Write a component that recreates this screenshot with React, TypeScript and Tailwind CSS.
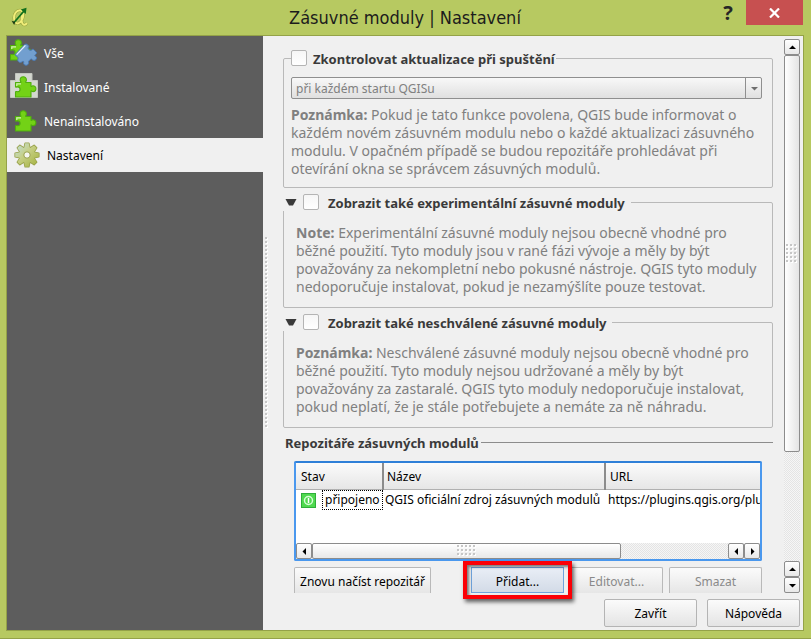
import type { ReactNode } from "react";

const PUZZLE =
  "M1 6.500H6C7.200 6.500 5.700 5.200 5.700 3.900A3.100 3.100 0 0 1 11.900 3.900C11.900 5.200 10.400 6.500 11.600 6.500H16.500V10C16.500 11.200 17.300 9.800 18.500 9.800A2.900 2.900 0 0 1 18.500 15.600C17.300 15.600 16.500 14.200 16.500 15.400V21H1V16.500C1 14.800 2.200 15.700 3.200 15.700A2.400 2.400 0 0 0 3.200 10.900C2.200 10.900 1 11.800 1 10.500Z";

function PuzzleShape() {
  return (
    <>
      <path d={PUZZLE} fill="#73d216" stroke="#4fae0e" strokeWidth="1.1" strokeLinejoin="round" />
      <path d="M2.300 10V7.800H6.500" fill="none" stroke="#fff" strokeOpacity=".7" strokeWidth="1.200" />
    </>
  );
}

function AllIcon() {
  return (
    <svg viewBox="0 0 28 28" className="size-7 shrink-0" aria-hidden="true">
      <g transform="translate(-.5 0)">
        <PuzzleShape />
      </g>
      <path
        d="M5 15.800 14.200 6C15.400 4.800 16.600 4.800 17.600 5.800L18.600 7C19.200 8 17.800 8.200 18.200 9.600 18.800 11.400 21 12 22.200 10.600 22.800 9.800 23.400 10.200 24 10.800L26.600 13.600C27 14.200 25.600 15.400 24.800 16.200 24.200 17 26.600 17 26.600 19A2.600 2.600 0 0 1 22.600 21C21.800 20.400 21.400 19.600 20.600 20.200L18.800 22C18.200 22.600 18.800 23 18.600 24.200A2.600 2.600 0 0 1 13.600 24.600C13.400 23.600 14.200 22.800 13.400 22.400 12.400 22 12 23.400 10.400 23.400A2.500 2.500 0 0 1 7.800 20.400C8 19.400 8.600 19 8 18.400Z"
        fill="#729fcf"
        stroke="#4a7ab5"
        strokeWidth="1"
        strokeLinejoin="round"
      />
      <path d="M6.600 15.600 15.400 6.400" stroke="#e4effa" strokeWidth="1.300" />
    </svg>
  );
}

function InstalledIcon() {
  return (
    <svg viewBox="0 0 28 28" className="size-7 shrink-0" aria-hidden="true">
      <path d="M5.500 .5H22V7.500H27.500V24.500H.5V7.500H5.500Z" fill="#d3d7cf" stroke="#c2c5be" strokeWidth="1" />
      <g transform="translate(4.500 3)">
        <PuzzleShape />
      </g>
    </svg>
  );
}

function AvailableIcon() {
  return (
    <svg viewBox="0 0 28 28" className="size-7 shrink-0" aria-hidden="true">
      <g transform="translate(4.500 3)">
        <PuzzleShape />
      </g>
    </svg>
  );
}

const TEETH = [0, 45, 90, 135, 180, 225, 270, 315];

function GearIcon() {
  return (
    <svg viewBox="0 0 26 26" className="size-[26px] shrink-0" aria-hidden="true">
      <defs>
        <linearGradient id="gear" x1="0" y1="0" x2="26" y2="26" gradientUnits="userSpaceOnUse">
          <stop offset="0" stopColor="#bfe0ea" />
          <stop offset=".45" stopColor="#c6cf84" />
          <stop offset="1" stopColor="#a0ae34" />
        </linearGradient>
        <mask id="gear-shape">
          {TEETH.map((a) => (
            <path key={a} d="M10 7 11.200 1.200H14.800L16 7Z" fill="#fff" transform={`rotate(${a} 13 13)`} />
          ))}
          <circle cx="13" cy="13" r="7.800" fill="#fff" />
        </mask>
      </defs>
      <g fill="#98a14a" stroke="#98a14a" strokeWidth="1.600" strokeLinejoin="round">
        {TEETH.map((a) => (
          <path key={a} d="M10 7 11.200 1.200H14.800L16 7Z" transform={`rotate(${a} 13 13)`} />
        ))}
        <circle cx="13" cy="13" r="7.800" />
      </g>
      <rect width="26" height="26" fill="url(#gear)" mask="url(#gear-shape)" />
      <circle cx="13" cy="13" r="3.200" fill="#f6f6f0" stroke="#98a14a" />
    </svg>
  );
}

const LETTER_Q =
  "M9 3.200C5.500 3.200 3 6.800 3 10.800c0 3.600 1.600 5.800 3.800 5.600 3-.4 5.400-4.400 5.400-8.200 0-3-1.200-5-3.200-5ZM11 8c-.6 4-.6 8.600 1.600 9.600 1.400.5 2.600-.4 3.200-1.800";

function AppLogo() {
  return (
    <svg viewBox="0 0 18 20" className="h-5 w-[18px]" aria-hidden="true">
      <path d={LETTER_Q} fill="none" stroke="#98a23e" strokeWidth="3" />
      <path d={LETTER_Q} fill="none" stroke="#f1ee7a" strokeWidth="2" />
      <path d="M3 15.500 13 4" stroke="#12701c" strokeWidth="1.800" />
      <path d="M15.500.8 14.800 7 9.800 2.600Z" fill="#12701c" />
      <path d="M.5 13.800 4.200 15 3.200 18Z" fill="#1c3a14" />
    </svg>
  );
}

function Grip({ cols, rows }: { cols: number; rows: number }) {
  return (
    <svg width={cols * 4} height={rows * 4} shapeRendering="crispEdges" aria-hidden="true">
      {Array.from({ length: cols * rows }, (_, i) => {
        const x = (i % cols) * 4;
        const y = Math.floor(i / cols) * 4;
        return (
          <g key={i}>
            <rect x={x + 1} y={y + 1} width="2" height="2" fill="#fff" />
            <rect x={x} y={y} width="2" height="2" fill="#c6c6c6" />
          </g>
        );
      })}
    </svg>
  );
}

const ARROWS = {
  up: "M1 6 4.500 2.500 8 6Z",
  down: "M1 3 4.500 6.500 8 3Z",
  left: "M6 1 2.500 4.500 6 8Z",
  right: "M3 1 6.500 4.500 3 8Z",
};

function ScrollButton({ dir, label }: { dir: keyof typeof ARROWS; label: string }) {
  return (
    <button
      type="button"
      aria-label={label}
      className="flex size-4 shrink-0 items-center justify-center rounded-xs border border-[#8c8c8c] bg-linear-to-b from-white to-[#e8e8e8]"
    >
      <svg viewBox="0 0 9 9" className="size-[9px] shrink-0" aria-hidden="true">
        <path d={ARROWS[dir]} fill="#000" />
      </svg>
    </button>
  );
}

const TRACK = "bg-[repeating-conic-gradient(#e4e4e4_0_25%,#f6f6f6_0_50%)] bg-size-[2px_2px]";

const HEADING = "pt-px text-[13px] leading-4 font-bold text-[#3a3a3a]";

function Check({ id }: { id: string }) {
  return (
    <input
      id={id}
      type="checkbox"
      className="size-4 shrink-0 appearance-none rounded-xs border border-[#b4b4b4] bg-linear-to-b from-[#f6f6f6] to-white"
    />
  );
}

function Note({ title, children }: { title: string; children: ReactNode }) {
  return (
    <p className="text-sm leading-[18px] whitespace-nowrap text-[#808080]">
      <b>{title}</b> {children}
    </p>
  );
}

function CollapsibleGroup({ id, title, children }: { id: string; title: string; children: ReactNode }) {
  return (
    <fieldset className="rounded-xs border border-[#b9b9b9] pr-2 pb-[11px] pl-3">
      <legend className="-ml-[13px] flex h-[18px] items-center bg-[#f0f0f0] pl-0.5">
        <button type="button" aria-label="Sbalit" className="mr-1.5 shrink-0">
          <svg viewBox="0 0 12 8" className="h-2 w-3" aria-hidden="true">
            <path d="M.5 1H11.500L8 7.500H4Z" fill="#3a3a3a" />
          </svg>
        </button>
        <Check id={id} />
        <label htmlFor={id} className={`${HEADING} pr-1.5 pl-[9px]`}>
          {title}
        </label>
      </legend>
      <div className="pt-[13px]">{children}</div>
    </fieldset>
  );
}

const NAV = [
  { label: "Vše", icon: <AllIcon /> },
  { label: "Instalované", icon: <InstalledIcon /> },
  { label: "Nenainstalováno", icon: <AvailableIcon /> },
];

const PUSH =
  "h-[26px] rounded-t-xs border border-b-0 border-[#b9b9b9] bg-linear-to-b from-[#fbfbfb] to-[#e6e6e6] pt-[3px] whitespace-nowrap";

const FOOT = "h-7 w-[93px] rounded-xs border border-[#b4b4b4] bg-linear-to-b from-[#fbfbfb] to-[#e4e4e4] pt-0.5";

export default function App() {
  return (
    <div className="flex h-screen flex-col overflow-hidden border-b border-[#94a248] bg-[#b7c961] pr-[7px] pb-[7px] pl-1.5 font-['Noto_Sans','DejaVu_Sans_Condensed',sans-serif] text-xs text-black">
      <header className="grid h-[35px] shrink-0 grid-cols-[1fr_auto_1fr] items-start">
        <div className="pt-[7px] pl-[5px]">
          <AppLogo />
        </div>
        <h1 className="pt-1.5 font-['DejaVu_Sans_Condensed','Noto_Sans',sans-serif] text-lg leading-6 text-[#1c1c1c]">
          Zásuvné moduly | Nastavení
        </h1>
        <div className="flex justify-end">
          <button type="button" aria-label="Nápověda k oknu" className="w-9 text-xl leading-6 font-bold text-[#262626]">
            ?
          </button>
          <button
            type="button"
            aria-label="Zavřít okno"
            className="mr-px flex h-[25px] w-[57px] items-center justify-center bg-[#c75050]"
          >
            <svg viewBox="0 0 11 10" className="h-2.5 w-[11px]" aria-hidden="true">
              <path d="M1 .5 10 9.500M10 .5 1 9.500" stroke="#fff" strokeWidth="2.200" />
            </svg>
          </button>
        </div>
      </header>

      <div className="flex min-h-0 flex-1 border border-[#94a248] bg-[#f0f0f0]">
        <nav className="w-64 shrink-0 bg-[#5d5d5d] text-white">
          <ul>
            {NAV.map((n) => (
              <li key={n.label}>
                <button type="button" className="flex h-[34px] w-full items-center gap-1.5 pl-[3px]">
                  {n.icon}
                  <span className="pt-0.5">{n.label}</span>
                </button>
              </li>
            ))}
            <li>
              <button
                type="button"
                aria-current="page"
                className="flex h-[34px] w-full items-center gap-[7px] bg-[#f0f0f0] pl-[7px] text-black"
              >
                <GearIcon />
                <span className="pt-0.5">Nastavení</span>
              </button>
            </li>
          </ul>
        </nav>

        <div className="flex w-5 shrink-0 items-center pl-0.5">
          <Grip cols={1} rows={48} />
        </div>

        <div className="flex min-w-0 flex-1 flex-col pr-[3px] pb-[3px]">
          <div className="flex h-[557px] shrink-0 pt-[3px]">
            <main className="mr-[11px] flex min-w-0 flex-1 flex-col gap-[5px] pt-2.5">
              <fieldset className="rounded-xs border border-[#b9b9b9] pr-2.5 pb-[9px] pl-[7px]">
                <legend className="flex h-[18px] items-center pr-px">
                  <Check id="updates" />
                  <label htmlFor="updates" className={`${HEADING} pl-1.5`}>
                    Zkontrolovat aktualizace při spuštění
                  </label>
                </legend>
                <div className="relative mt-2.5 mb-[7px] text-[#808080]">
                  <select
                    aria-label="Interval kontroly"
                    disabled
                    className="block h-[22px] w-full appearance-none rounded-xs border border-[#8f8f8f] bg-linear-to-b from-[#f8f8f8] to-[#e0e0e0] pt-0.5 pl-1 opacity-100"
                  >
                    <option>při každém startu QGISu</option>
                  </select>
                  <span className="pointer-events-none absolute inset-y-0 right-0 flex w-[17px] items-center justify-center border-l border-[#8f8f8f]">
                    <svg viewBox="0 0 9 9" className="size-[9px]" aria-hidden="true">
                      <path d={ARROWS.down} fill="#6e6e6e" />
                    </svg>
                  </span>
                </div>
                <Note title="Poznámka:">
                  Pokud je tato funkce povolena, QGIS bude informovat o
                  <br />
                  každém novém zásuvném modulu nebo o každé aktualizaci zásuvného
                  <br />
                  modulu. V opačném případě se budou repozitáře prohledávat při
                  <br />
                  otevírání okna se správcem zásuvných modulů.
                </Note>
              </fieldset>

              <CollapsibleGroup id="experimental" title="Zobrazit také experimentální zásuvné moduly">
                <Note title="Note:">
                  Experimentální zásuvné moduly nejsou obecně vhodné pro
                  <br />
                  běžné použití. Tyto moduly jsou v rané fázi vývoje a měly by být
                  <br />
                  považovány za nekompletní nebo pokusné nástroje. QGIS tyto moduly
                  <br />
                  nedoporučuje instalovat, pokud je nezamýšlíte pouze testovat.
                </Note>
              </CollapsibleGroup>

              <CollapsibleGroup id="deprecated" title="Zobrazit také neschválené zásuvné moduly">
                <Note title="Poznámka:">
                  Neschválené zásuvné moduly nejsou obecně vhodné pro
                  <br />
                  běžné použití. Tyto moduly nejsou udržované a měly by být
                  <br />
                  považovány za zastaralé. QGIS tyto moduly nedoporučuje instalovat,
                  <br />
                  pokud neplatí, že je stále potřebujete a nemáte za ně náhradu.
                </Note>
              </CollapsibleGroup>

              <section>
                <div className="flex h-[18px] items-center gap-0.5 pl-0.5">
                  <h2 className={HEADING}>Repozitáře zásuvných modulů</h2>
                  <span className="h-px flex-1 bg-[#8c8c8c]" />
                </div>

                <div className="mt-2.5 mr-[11px] ml-[11px] flex h-[100px] flex-col overflow-hidden rounded-xs border-2 border-[#4a98ee] border-t-[#2f80d8] bg-white">
                  <table className="w-full table-fixed text-left whitespace-nowrap">
                    <thead>
                      <tr className="h-[26px] bg-linear-to-b from-[#fbfbfb] to-[#e6e6e6]">
                        <th className="w-[87px] border-r-2 border-b border-[#8c8c8c] border-b-[#b0b0b0] pt-0.5 pl-[5px] font-normal">Stav</th>
                        <th className="w-[222px] border-r-2 border-b border-[#8c8c8c] border-b-[#b0b0b0] pt-0.5 pl-[3px] font-normal">Název</th>
                        <th className="border-b border-b-[#b0b0b0] pt-0.5 pl-1 font-normal">URL</th>
                      </tr>
                    </thead>
                    <tbody>
                      <tr className="h-[22px]">
                        <td>
                          <div className="flex items-center gap-1.5 pl-[5px]">
                            <svg viewBox="0 0 15 15" className="size-[15px] shrink-0" aria-hidden="true">
                              <rect x=".5" y=".5" width="14" height="14" fill="#4fd94f" stroke="#2fae3a" />
                              <circle cx="7.500" cy="7.500" r="4" fill="none" stroke="#d8ffd8" strokeWidth="1.500" />
                              <path d="M7.500 5V10" stroke="#fff" strokeWidth="1.500" />
                            </svg>
                            <span className="flex-1 border border-dotted border-black pl-0.5 leading-[18px]">připojeno</span>
                          </div>
                        </td>
                        <td className="pl-0.5">QGIS oficiální zdroj zásuvných modulů</td>
                        <td className="overflow-hidden pl-[3px]">https://plugins.qgis.org/plugins/plugins.xml</td>
                      </tr>
                    </tbody>
                  </table>
                  <div className={`mt-auto flex h-4 ${TRACK}`}>
                    <ScrollButton dir="left" label="Posunout doleva" />
                    <div className="flex w-2/3 items-center justify-center rounded-xs border border-[#8c8c8c] bg-linear-to-b from-white to-[#e8e8e8]">
                      <Grip cols={5} rows={3} />
                    </div>
                    <span className="flex-1" />
                    <ScrollButton dir="left" label="Posunout doleva na konci" />
                    <ScrollButton dir="right" label="Posunout doprava" />
                  </div>
                </div>

                <div className="mt-1.5 mr-[11px] ml-[11px] flex gap-1.5">
                  <button type="button" className={`${PUSH} w-[137px]`}>
                    Znovu načíst repozitář
                  </button>
                  <div className="relative ml-auto">
                    <button
                      type="button"
                      className="h-[26px] w-[93px] border border-[#6fa3dc] bg-linear-to-b from-[#e9eef6] to-[#d3dbe7] pt-[3px]"
                    >
                      Přidat...
                    </button>
                    <span className="pointer-events-none absolute -inset-x-2 -top-1.5 z-10 h-[38px] border-4 border-[#fb0006] shadow-[2px_3px_4px_rgba(0,0,0,.6),inset_2px_2px_3px_rgba(0,0,0,.5)]" />
                  </div>
                  <button type="button" disabled className={`${PUSH} w-[93px] text-[#8a8a8a]`}>
                    Editovat...
                  </button>
                  <button type="button" disabled className={`${PUSH} w-[93px] text-[#8a8a8a]`}>
                    Smazat
                  </button>
                </div>
              </section>
            </main>

            <div className={`flex w-4 shrink-0 flex-col ${TRACK}`}>
              <ScrollButton dir="up" label="Posunout nahoru" />
              <div className="flex h-[397px] items-center justify-center rounded-xs border border-[#8c8c8c] bg-linear-to-r from-white to-[#e4e4e4]">
                <Grip cols={3} rows={5} />
              </div>
              <span className="flex-1" />
              <ScrollButton dir="up" label="Posunout nahoru na konci" />
              <ScrollButton dir="down" label="Posunout dolů" />
            </div>
          </div>

          <footer className="mt-auto flex justify-end gap-2.5">
            <button type="button" className={FOOT}>
              Zavřít
            </button>
            <button type="button" className={FOOT}>
              Nápověda
            </button>
          </footer>
        </div>
      </div>
    </div>
  );
}
